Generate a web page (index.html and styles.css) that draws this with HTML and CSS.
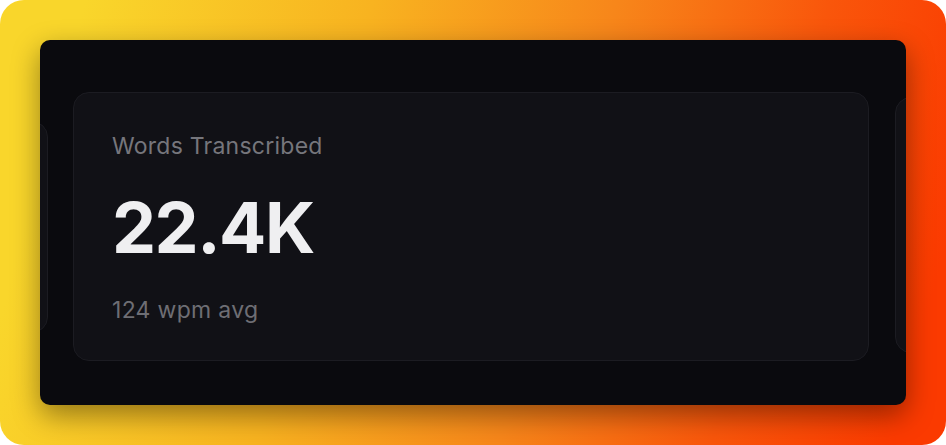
FILE: index.html
```html
<!DOCTYPE html>
<html lang="en">

<head>
  <meta charset="UTF-8">
  <meta name="viewport" content="width=device-width, initial-scale=1.0">
  <title>Words Transcribed</title>
  <link rel="stylesheet" href="styles.css">
</head>

<body>
  <div class="frame">
    <div class="panel">
      <div class="track">
        <div class="card card-side card-left"></div>
        <div class="card card-main">
          <div class="stat-label">Words Transcribed</div>
          <div class="stat-value">22.4K</div>
          <div class="stat-note">124 wpm avg</div>
        </div>
        <div class="card card-side card-right"></div>
      </div>
    </div>
  </div>
</body>

</html>
```

FILE: styles.css
```css
body {
  margin: 0;
  background-color: #ffffff;
  font-family: 'Inter', 'Noto Sans', sans-serif;
}

.frame {
  width: 946px;
  height: 445px;
  box-sizing: border-box;
  padding: 40px;
  border-radius: 24px;
  background: linear-gradient(105deg, #f9d62b 8%, #f8b320 35%, #f7861a 58%, #f9560b 78%, #fb3a00 95%);
  overflow: hidden;
}

.panel {
  width: 866px;
  height: 365px;
  background-color: #0a0a0e;
  border-radius: 10px;
  box-shadow: 0 10px 28px rgba(0, 0, 0, 0.4);
  overflow: hidden;
}

.track {
  display: flex;
  align-items: center;
  height: 100%;
  box-sizing: border-box;
  padding-top: 8px;
  margin-left: -788px;
}

.card {
  flex: none;
  width: 796px;
  box-sizing: border-box;
  background-color: #111116;
  border: 1px solid #1c1c22;
  border-radius: 16px;
}

.card-main {
  height: 269px;
  padding: 39px 38px;
  margin: 0 26px 0 25px;
}

.card-left {
  height: 212px;
}

.card-right {
  height: 256px;
  margin-top: -4px;
}

.stat-label {
  font-size: 23px;
  line-height: 28px;
  letter-spacing: 0.25px;
  color: #76767c;
}

.stat-value {
  margin-top: 28px;
  font-size: 70px;
  line-height: 80px;
  font-weight: 700;
  letter-spacing: -1.5px;
  color: #efeff1;
}

.stat-note {
  margin-top: 28px;
  font-size: 23px;
  line-height: 28px;
  letter-spacing: 0.3px;
  color: #6e6e74;
}
```
